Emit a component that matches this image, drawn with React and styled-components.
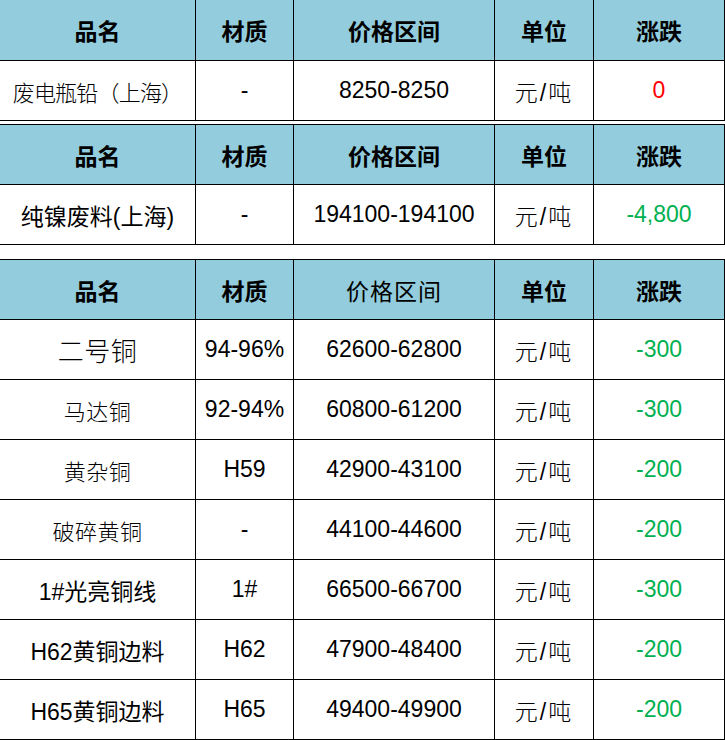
import React from 'react'
import styled, { createGlobalStyle } from 'styled-components'

const GlobalStyle = createGlobalStyle`
  html, body {
    margin: 0;
    padding: 0;
    background: #fff;
  }
  body {
    font-family: "Liberation Sans", "Noto Sans CJK SC", sans-serif;
    color: #000;
  }
`

const COLS = ['品名', '材质', '价格区间', '单位', '涨跌']

const sections = [
  {
    first: true,
    plainPrice: false,
    rows: [
      { name: '废电瓶铅（上海）', thin: true, tight: true, mat: '-', price: '8250-8250', change: '0', up: true },
    ],
  },
  {
    gap: 3,
    plainPrice: false,
    rows: [
      { name: '纯镍废料(上海)', wide: true, mat: '-', price: '194100-194100', change: '-4,800' },
    ],
  },
  {
    gap: 14,
    plainPrice: true,
    rows: [
      { name: '二号铜', thin: true, big: true, mat: '94-96%', price: '62600-62800', change: '-300' },
      { name: '马达铜', thin: true, mat: '92-94%', price: '60800-61200', change: '-300' },
      { name: '黄杂铜', thin: true, mat: 'H59', price: '42900-43100', change: '-200' },
      { name: '破碎黄铜', thin: true, mat: '-', price: '44100-44600', change: '-200' },
      { name: '1#光亮铜线', wide: true, mat: '1#', price: '66500-66700', change: '-300' },
      { name: 'H62黄铜边料', wide: true, mat: 'H62', price: '47900-48400', change: '-200' },
      { name: 'H65黄铜边料', wide: true, mat: 'H65', price: '49400-49900', change: '-200' },
    ],
  },
]

function App() {
  return (
    <>
      <GlobalStyle />
      <Page>
        {sections.map((s, i) => (
          <Table key={i} gap={s.gap} top={!s.first}>
            {COLS.map((c, j) => (
              <Head key={c} tall={s.first} light={s.plainPrice && j === 2}>
                {c}
              </Head>
            ))}
            {s.rows.map((r) => (
              <React.Fragment key={r.name}>
                <Cell thin={r.thin} big={r.big} tight={r.tight} num={r.wide}>{r.name}</Cell>
                <Cell num>{r.mat}</Cell>
                <Cell num>{r.price}</Cell>
                <Unit>元/吨</Unit>
                <Change num up={r.up}>{r.change}</Change>
              </React.Fragment>
            ))}
          </Table>
        ))}
      </Page>
    </>
  )
}

export default App

const Page = styled.div`
  width: 725px;
  display: flex;
  flex-direction: column;
`
const Table = styled.div`
  display: grid;
  grid-template-columns: 196px 98px 201px 99px 131px;
  margin-top: ${(p) => p.gap || 0}px;
  border-top: ${(p) => (p.top ? '1px solid #000' : 'none')};
`
const Cell = styled.div`
  box-sizing: border-box;
  height: 60px;
  border-right: 1px solid #000;
  border-bottom: 1px solid #000;
  display: flex;
  align-items: center;
  justify-content: center;
  white-space: nowrap;
  font-size: ${(p) => (p.big ? '26px' : p.num ? '23px' : '22px')};
  font-weight: ${(p) => (p.thin ? 300 : 400)};
  letter-spacing: ${(p) => (p.tight ? '-0.8px' : p.thin ? '0.5px' : '0')};
`
const Head = styled(Cell)`
  height: ${(p) => (p.tall ? '61px' : '60px')};
  background: #93cddd;
  font-size: 23px;
  font-weight: ${(p) => (p.light ? 400 : 700)};
  letter-spacing: ${(p) => (p.light ? '1px' : '0')};
`
const Unit = styled(Cell)`
  font-size: 23px;
  font-weight: 300;
  letter-spacing: 2px;
`
const Change = styled(Cell)`
  color: ${(p) => (p.up ? '#ff0000' : '#00b050')};
`
